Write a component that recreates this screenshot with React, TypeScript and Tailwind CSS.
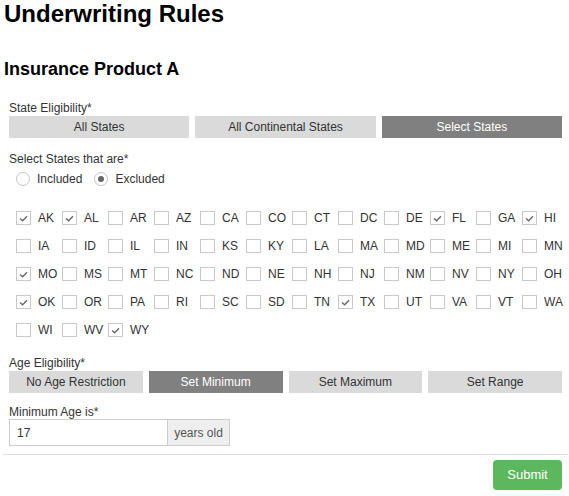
import React from "react";

const STATES = [
  "AK", "AL", "AR", "AZ", "CA", "CO", "CT", "DC", "DE", "FL", "GA", "HI",
  "IA", "ID", "IL", "IN", "KS", "KY", "LA", "MA", "MD", "ME", "MI", "MN",
  "MO", "MS", "MT", "NC", "ND", "NE", "NH", "NJ", "NM", "NV", "NY", "OH",
  "OK", "OR", "PA", "RI", "SC", "SD", "TN", "TX", "UT", "VA", "VT", "WA",
  "WI", "WV", "WY",
];

const SELECTED = new Set(["AK", "AL", "FL", "HI", "MO", "OK", "TX", "WY"]);

function SegButton({ label, active }: { label: string; active?: boolean }) {
  return (
    <button
      type="button"
      className={
        active
          ? "h-[22px] flex items-center justify-center bg-[#808080] text-white text-[12px]"
          : "h-[22px] flex items-center justify-center bg-[#dadada] text-[#333] text-[12px]"
      }
    >
      {label}
    </button>
  );
}

function Radio({ label, checked }: { label: string; checked?: boolean }) {
  return (
    <label className="flex items-center gap-[7px]">
      <span className="w-[14px] h-[14px] rounded-full border border-[#c4c4c4] bg-white flex items-center justify-center">
        {checked && <span className="w-[6px] h-[6px] rounded-full bg-[#666]" />}
      </span>
      <span className="text-[12px] text-[#333]">{label}</span>
    </label>
  );
}

function StateBox({ code, checked }: { code: string; checked: boolean }) {
  return (
    <label className="h-[28px] flex items-center gap-[7px]">
      <span className="w-[15px] h-[14px] border border-[#c8c8c8] bg-white flex items-center justify-center">
        {checked && (
          <svg width="9" height="7" viewBox="0 0 9 7" fill="none">
            <path d="M1 3.4 L3.6 5.8 L8 1.2" stroke="#666" strokeWidth="1.3" />
          </svg>
        )}
      </span>
      <span className="text-[12px] text-[#333]">{code}</span>
    </label>
  );
}

export default function App() {
  return (
    <div className="w-[569px] h-[496px] overflow-hidden bg-white font-['Liberation_Sans',Arial,sans-serif] text-[#333]">
      <h1 className="pl-[4px] text-[24px] leading-[28px] font-bold text-black">Underwriting Rules</h1>
      <h3 className="mt-[31px] pl-[4px] text-[18px] leading-[21px] font-bold text-black">Insurance Product A</h3>

      <div className="pl-[9px] pr-[7px]">
        <div className="mt-[21px] text-[12px] leading-[14px]">State Eligibility*</div>
        <div className="mt-[1px] grid grid-cols-3 gap-[6px]">
          <SegButton label="All States" />
          <SegButton label="All Continental States" />
          <SegButton label="Select States" active />
        </div>

        <div className="mt-[14px] text-[12px] leading-[14px]">Select States that are*</div>
        <div className="mt-[4px] pl-[7px] flex items-center gap-[12px]">
          <Radio label="Included" />
          <Radio label="Excluded" checked />
        </div>

        <div className="mt-[16px] ml-[7px] grid grid-cols-[repeat(12,46px)]">
          {STATES.map((s) => (
            <StateBox key={s} code={s} checked={SELECTED.has(s)} />
          ))}
        </div>

        <div className="mt-[12px] text-[12px] leading-[14px]">Age Eligibility*</div>
        <div className="mt-[1px] grid grid-cols-4 gap-[6px]">
          <SegButton label="No Age Restriction" />
          <SegButton label="Set Minimum" active />
          <SegButton label="Set Maximum" />
          <SegButton label="Set Range" />
        </div>

        <div className="mt-[12px] text-[12px] leading-[14px]">Minimum Age is*</div>
        <div className="flex h-[27px]">
          <div className="w-[159px] border border-[#ccc] flex items-center pl-[7px] text-[12px] text-[#333]">17</div>
          <div className="w-[62px] border border-l-0 border-[#ccc] bg-[#eee] flex items-center justify-center text-[12px] text-[#555]">
            years old
          </div>
        </div>
      </div>

      <div className="mt-[8px] ml-[3px] mr-[1px] h-px bg-[#ddd]" />

      <div className="flex justify-end pr-[7px] mt-[5px]">
        <button
          type="button"
          className="w-[69px] h-[30px] rounded-[4px] bg-[#5cb85c] text-white text-[13px] flex items-center justify-center"
        >
          Submit
        </button>
      </div>
    </div>
  );
}
